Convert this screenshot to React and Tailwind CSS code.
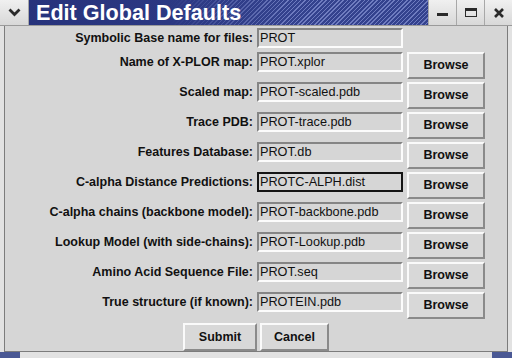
import React from "react";

const rows = [
  ["Name of X-PLOR map:", "PROT.xplor"],
  ["Scaled map:", "PROT-scaled.pdb"],
  ["Trace PDB:", "PROT-trace.pdb"],
  ["Features Database:", "PROT.db"],
  ["C-alpha Distance Predictions:", "PROTC-ALPH.dist", true],
  ["C-alpha chains (backbone model):", "PROT-backbone.pdb"],
  ["Lookup Model (with side-chains):", "PROT-Lookup.pdb"],
  ["Amino Acid Sequence File:", "PROT.seq"],
  ["True structure (if known):", "PROTEIN.pdb"],
];

function Label({ text }) {
  return (
    <div className="w-[248px] h-[20px] flex items-center justify-end text-[12.5px] font-bold text-[#111] whitespace-nowrap leading-none">
      {text}
    </div>
  );
}

function Entry({ value, focused }) {
  return (
    <div
      className={
        "ml-[4px] w-[146px] h-[20px] flex items-center pl-[1px] text-[12.7px] text-[#111] leading-none whitespace-nowrap bg-[#d6d6d6] " +
        (focused
          ? "border-2 border-[#141414]"
          : "border-2 border-t-[#858585] border-l-[#858585] border-b-[#fcfcfc] border-r-[#fcfcfc]")
      }
    >
      {value}
    </div>
  );
}

function Btn({ children, w }) {
  return (
    <div
      className={
        "h-[27px] flex items-center justify-center text-[12.5px] font-bold text-[#111] leading-none bg-[#d8d8d8] border-2 border-t-[#fafafa] border-l-[#fafafa] border-b-[#8a8a8a] border-r-[#8a8a8a] " +
        w
      }
    >
      {children}
    </div>
  );
}

export default function App() {
  return (
    <div
      className="w-[512px] h-[358px] bg-[#e2e2e2] flex flex-col overflow-hidden"
      style={{ fontFamily: '"Liberation Sans", Arial, sans-serif' }}
    >
      {/* Title bar */}
      <div className="h-[26px] flex shrink-0 border-b border-[#9a9a9a]">
        <div className="w-[29px] h-full flex items-center justify-center bg-[linear-gradient(#f0f0f0,#d8d8d8)] border-r border-[#a8a8a8]">
          <svg width="13" height="9" viewBox="0 0 13 9">
            <path d="M1.5 1.5 L6.5 6.5 L11.5 1.5" fill="none" stroke="#2a2a2a" strokeWidth="2.8" />
          </svg>
        </div>
        <div className="flex-1 h-full flex items-center pl-[7px] bg-[linear-gradient(to_right,#27337c_0%,#2b3882_35%,rgba(43,56,130,0)_65%),repeating-linear-gradient(135deg,#6f7cc0_0px,#6f7cc0_1px,#34428e_1px,#34428e_3px)]">
          <span className="text-white font-bold text-[21.6px] leading-none">
            Edit Global Defaults
          </span>
        </div>
        <div className="w-[28px] h-full flex items-end justify-center pb-[9px] bg-[linear-gradient(#f0f0f0,#d8d8d8)] border-l border-[#a8a8a8]">
          <div className="w-[11px] h-[3px] bg-[#2a2a2a]" />
        </div>
        <div className="w-[28px] h-full flex items-center justify-center bg-[linear-gradient(#f0f0f0,#d8d8d8)] border-l border-[#a8a8a8]">
          <div className="w-[12px] h-[9px] border border-[#2a2a2a] border-t-[3px]" />
        </div>
        <div className="w-[28px] h-full flex items-center justify-center bg-[linear-gradient(#f0f0f0,#d8d8d8)] border-l border-[#a8a8a8]">
          <svg width="10" height="10" viewBox="0 0 10 10">
            <path d="M1 1 L9 9 M9 1 L1 9" stroke="#2a2a2a" strokeWidth="2.6" />
          </svg>
        </div>
      </div>

      {/* Body */}
      <div className="flex-1 mx-[4px] bg-[#d6d6d6] border-l border-r border-b border-[#7c7c7c] flex flex-col pt-[2px]">
        <div className="flex items-start h-[24px]">
          <Label text="Symbolic Base name for files:" />
          <Entry value="PROT" />
        </div>
        {rows.map(([l, v, f]) => (
          <div key={l} className="flex items-start h-[30px]">
            <Label text={l} />
            <Entry value={v} focused={f} />
            <div className="ml-[4px]">
              <Btn w="w-[78px]">Browse</Btn>
            </div>
          </div>
        ))}
        <div className="flex justify-center gap-[3px] mt-[1px]">
          <Btn w="w-[74px] h-[28px]">Submit</Btn>
          <Btn w="w-[69px] h-[28px]">Cancel</Btn>
        </div>
      </div>
      <div className="h-[6px] shrink-0 flex justify-between">
        <div className="w-[20px] h-full bg-[#4a5894]" />
        <div className="w-[20px] h-full bg-[#4a5894]" />
      </div>
    </div>
  );
}
